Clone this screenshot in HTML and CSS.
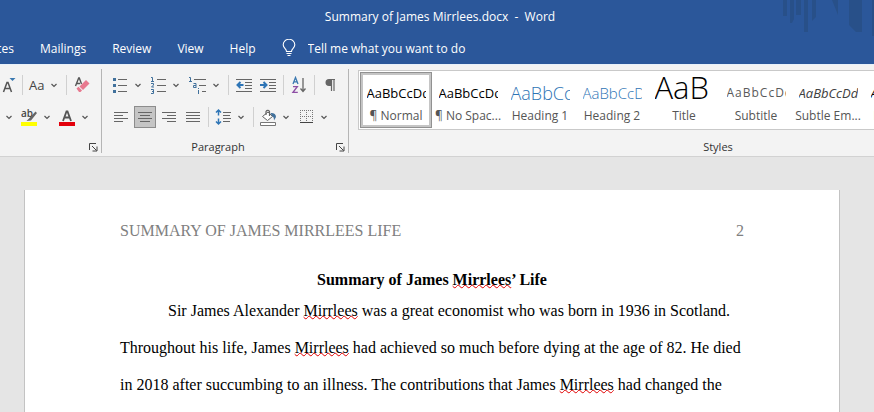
FILE: index.html
```html
<!DOCTYPE html>
<html lang="en">
<head>
    <meta charset="UTF-8">
    <meta name="viewport" content="width=device-width, initial-scale=1.0">
    <title>Summary of James Mirrlees.docx - Word</title>
    <link rel="stylesheet" href="styles.css">
</head>
<body>
    <svg class="symbols" aria-hidden="true">
        <symbol id="caret" viewBox="0 0 12 12"><path d="M3.5 5 L6 7.5 L8.5 5" fill="none" stroke="#555" stroke-width="1.2"/></symbol>
        <symbol id="launcher" viewBox="0 0 9 9"><path d="M0.5 7 V0.5 H7 M3 3 L7.5 7.5 M8 3.5 V8 H3.5" fill="none" stroke="#444"/></symbol>
    </svg>

    <header class="top">
        <div class="title-bar">
            <span class="doc-name">Summary of James Mirrlees.docx&nbsp; -&nbsp; Word</span>
            <svg class="art" width="94" height="36" viewBox="0 0 94 36" aria-hidden="true">
                <g fill="#285089">
                    <path d="M3 0h4v16h-4zM10 0h4v19l-2 4h-2zM16 0h5v15h-5zM24 0h4v32h-4zM32 0h4v17l-4 4z"/>
                    <path d="M52 0h6v15zM69 0h13v32h-6l-7-7zM92 0h2v36h-2z"/>
                </g>
            </svg>
        </div>
        <nav class="tabs">
            <a class="tab cut" href="#">References</a>
            <a class="tab" href="#">Mailings</a>
            <a class="tab" href="#">Review</a>
            <a class="tab" href="#">View</a>
            <a class="tab" href="#">Help</a>
            <label class="tell-me">
                <svg width="14" height="18" viewBox="0 0 14 18" fill="none" stroke="#fff" stroke-width="1.1"><path d="M4.5 12.5 C4.5 9.5 1.2 9 1.2 5.8 A5.5 5.2 0 0 1 12.8 5.8 C12.8 9 9.5 9.5 9.5 12.5 Z M4.5 14.5 H9.5 M5.5 16.5 H8.5"/></svg>
                <input type="text" placeholder="Tell me what you want to do" aria-label="Tell me what you want to do">
            </label>
        </nav>
    </header>

    <div class="ribbon">
        <section class="group font-group">
            <div class="row">
                <button class="tool shrink" aria-label="Shrink font">
                    <svg width="16" height="18" viewBox="0 0 16 18"><path d="M2.5 16 L6 6.5 H7 L10.5 16 M3.8 12.5 H9.2" fill="none" stroke="#555" stroke-width="1.5"/><path d="M8.5 2 H14.5 L11.5 5z" fill="#3a78b0"/></svg>
                </button>
                <span class="sep"></span>
                <button class="split change-case" aria-label="Change case">Aa<svg class="caret"><use href="#caret"/></svg></button>
                <span class="sep"></span>
                <button class="tool" aria-label="Clear formatting">
                    <svg width="16" height="18" viewBox="0 0 16 18"><path d="M1.5 10 L4.7 2 H5.3 L7.5 8 M2.5 7.5 H6" fill="none" stroke="#555" stroke-width="1.4"/><path d="M5.5 10.5 L12 4 L15.5 7.5 L9 14z" fill="#e8798f"/><path d="M2.5 12.5 L4.5 10.8 L8 14.5 L6.5 16 H5z" fill="#e8798f"/></svg>
                </button>
            </div>
            <div class="row">
                <button class="tool caret-only" aria-label="Text effects"><svg class="caret"><use href="#caret"/></svg></button>
                <button class="split" aria-label="Text highlight color">
                    <svg width="16" height="18" viewBox="0 0 16 18"><path d="M0 14h16v4H0z" fill="#ffff00"/><text x="0" y="9" class="glyph-ab">ab</text><path d="M14.5 3.5 L8 10.5 L5.5 13 L10 12.5 L16 5z" fill="#666"/></svg>
                    <svg class="caret"><use href="#caret"/></svg>
                </button>
                <button class="split" aria-label="Font color">
                    <svg width="16" height="18" viewBox="0 0 16 18"><path d="M0 14h16v4H0z" fill="#e3000b"/><path d="M4 13 L7.5 3.5 H8.5 L12 13 M5.5 9.5 H10.5" fill="none" stroke="#555" stroke-width="1.8"/></svg>
                    <svg class="caret"><use href="#caret"/></svg>
                </button>
            </div>
            <div class="group-foot">
                <span class="group-name"></span>
                <button class="launcher" aria-label="Font settings"><svg width="9" height="9"><use href="#launcher"/></svg></button>
            </div>
        </section>

        <section class="group paragraph-group">
            <div class="row">
                <button class="split" aria-label="Bullets">
                    <svg width="16" height="18" viewBox="0 0 16 18"><path d="M1 2h3v3H1zM1 8h3v3H1zM1 14h3v3H1z" fill="#41719c"/><path d="M6 3.5h9M6 9.5h9M6 15.5h9" stroke="#666"/></svg>
                    <svg class="caret"><use href="#caret"/></svg>
                </button>
                <button class="split" aria-label="Numbering">
                    <svg width="16" height="18" viewBox="0 0 16 18"><path d="M1 1.5H2.5V5M1 5.5H4M1 7.5H3.5V9L1.5 11H4M1 13.5H3.5V17.5H1M2 15.5H3.5" fill="none" stroke="#41719c"/><path d="M7 3.5h9M7 9.5h9M7 15.5h9" stroke="#666"/></svg>
                    <svg class="caret"><use href="#caret"/></svg>
                </button>
                <button class="split" aria-label="Multilevel list">
                    <svg width="18" height="18" viewBox="0 0 18 18"><path d="M1 1.5H2.5V5M1 5.5H4M5.5 7.5H8V11M8 9.5H5.5V11.5H8.5M10.5 12V13M10.5 14V18" fill="none" stroke="#41719c"/><path d="M6 3.5h12M11 9.5h7M14 15.5h4" stroke="#666"/></svg>
                    <svg class="caret"><use href="#caret"/></svg>
                </button>
                <span class="sep"></span>
                <button class="tool" aria-label="Decrease indent">
                    <svg width="16" height="14" viewBox="0 0 16 14"><path d="M0 1.5h16M9 4.5h7M9 7.5h7M9 10.5h7M0 13.5h16" stroke="#666"/><path d="M7.5 7 H2 M4.5 4 L1.5 7 L4.5 10" fill="none" stroke="#2e75b6" stroke-width="2"/></svg>
                </button>
                <button class="tool" aria-label="Increase indent">
                    <svg width="16" height="14" viewBox="0 0 16 14"><path d="M0 1.5h16M9 4.5h7M9 7.5h7M9 10.5h7M0 13.5h16" stroke="#666"/><path d="M0 7 H5.5 M3.5 4 L6.5 7 L3.5 10" fill="none" stroke="#2e75b6" stroke-width="2"/></svg>
                </button>
                <span class="sep"></span>
                <button class="tool" aria-label="Sort">
                    <svg width="16" height="18" viewBox="0 0 16 18" fill="none"><path d="M2 8 L4.5 1.5 L7 8 M3 5.8 H6" stroke="#3a78b0" stroke-width="1.3"/><path d="M2 10.6 H6.3 L2 16.4 H6.8" stroke="#8e4fa5" stroke-width="1.4"/><path d="M12 2 V15.5 M9.5 12.5 L12 15.5 L14.5 12.5" stroke="#666" stroke-width="1.3"/></svg>
                </button>
                <span class="sep"></span>
                <button class="tool" aria-label="Show formatting marks">
                    <svg width="12" height="14" viewBox="0 0 12 14"><path d="M11 1.5H5 M7.5 1.5V13 M10 1.5V13" fill="none" stroke="#666" stroke-width="1.2"/><path d="M7 1H5a3.4 3.4 0 0 0 0 7h2z" fill="#666"/></svg>
                </button>
            </div>
            <div class="row">
                <button class="tool" aria-label="Align left"><svg width="14" height="12" viewBox="0 0 14 12"><path d="M0 1.5h14M0 4.5h9M0 7.5h14M0 10.5h9" stroke="#666"/></svg></button>
                <button class="tool active" aria-label="Center"><svg width="14" height="12" viewBox="0 0 14 12"><path d="M0 1.5h14M2 4.5h10M0 7.5h14M2 10.5h10" stroke="#666"/></svg></button>
                <button class="tool" aria-label="Align right"><svg width="14" height="12" viewBox="0 0 14 12"><path d="M0 1.5h14M5 4.5h9M0 7.5h14M5 10.5h9" stroke="#666"/></svg></button>
                <button class="tool" aria-label="Justify"><svg width="14" height="12" viewBox="0 0 14 12"><path d="M0 1.5h14M0 4.5h14M0 7.5h14M0 10.5h14" stroke="#666"/></svg></button>
                <span class="sep"></span>
                <button class="split" aria-label="Line spacing">
                    <svg width="16" height="18" viewBox="0 0 16 18"><path d="M3.5 2V7.5M3.5 10.5V16M1 4.5L3.5 2L6 4.5M1 13.5L3.5 16L6 13.5" fill="none" stroke="#2e75b6" stroke-width="1.5"/><path d="M8 4.5h8M8 7.5h7M8 10.5h8M8 13.5h7" stroke="#666"/></svg>
                    <svg class="caret"><use href="#caret"/></svg>
                </button>
                <span class="sep"></span>
                <button class="split" aria-label="Shading">
                    <svg width="16" height="18" viewBox="0 0 16 18"><path d="M.5 14.5h15v3H.5z" fill="#fff" stroke="#777"/><path d="M2.5 8.5L8 4L12.5 8.5L7.5 12.5z" fill="#fff" stroke="#666"/><path d="M6 7V3.500a2 2 0 0 1 3.5 0V8" fill="none" stroke="#666" stroke-width="1.2"/><path d="M10.5 5C13.5 4.5 16 6 16 9L14 12.5C14 9.5 13 8.5 12 8z" fill="#41719c"/></svg>
                    <svg class="caret"><use href="#caret"/></svg>
                </button>
                <button class="split" aria-label="Borders">
                    <svg width="16" height="18" viewBox="0 0 16 18"><path d="M2 2.5h13M2 8.5h13M2.5 2v12M8.5 2v12M14.5 2v12" stroke="#777" stroke-dasharray="1 1"/><path d="M2 14.5h13" stroke="#444"/></svg>
                    <svg class="caret"><use href="#caret"/></svg>
                </button>
            </div>
            <div class="group-foot">
                <span class="group-name">Paragraph</span>
                <button class="launcher" aria-label="Paragraph settings"><svg width="9" height="9"><use href="#launcher"/></svg></button>
            </div>
        </section>

        <section class="group styles-group">
            <div class="gallery">
                <button class="style selected"><span class="preview">AaBbCcDd</span><span class="style-name">¶ Normal</span></button>
                <button class="style"><span class="preview">AaBbCcDd</span><span class="style-name">¶ No Spac...</span></button>
                <button class="style"><span class="preview heading1">AaBbCcDd</span><span class="style-name">Heading 1</span></button>
                <button class="style"><span class="preview heading2">AaBbCcDd</span><span class="style-name">Heading 2</span></button>
                <button class="style"><span class="preview title">AaB</span><span class="style-name">Title</span></button>
                <button class="style"><span class="preview subtitle">AaBbCcDd</span><span class="style-name">Subtitle</span></button>
                <button class="style"><span class="preview emphasis">AaBbCcDd</span><span class="style-name">Subtle Em...</span></button>
                <button class="style"><span class="preview emphasis strong">AaBbCcDd</span><span class="style-name">Emphasis</span></button>
            </div>
            <div class="group-foot">
                <span class="group-name">Styles</span>
            </div>
        </section>
    </div>

    <main class="workspace">
        <article class="page">
            <div class="page-header"><span>SUMMARY OF JAMES MIRRLEES LIFE</span><span>2</span></div>
            <h1>Summary of James <span class="typo">Mirrlees</span>’ Life</h1>
            <p>Sir James Alexander <span class="typo">Mirrlees</span> was a great economist who was born in 1936 in Scotland. Throughout his life, James <span class="typo">Mirrlees</span> had achieved so much before dying at the age of 82. He died in 2018 after succumbing to an illness. The contributions that James <span class="typo">Mirrlees</span> had changed the</p>
        </article>
    </main>
</body>
</html>
```
FILE: styles.css
```css
* {
    box-sizing: border-box;
}

body {
    margin: 0;
    height: 100vh;
    display: flex;
    flex-direction: column;
    overflow: hidden;
    font-family: "Open Sans", "Noto Sans", sans-serif;
    font-size: 12px;
    background-color: #e5e5e5;
}

button {
    border: 0;
    padding: 0;
    background: none;
    font: inherit;
    color: #444;
}

.symbols {
    display: none;
}

/* Title bar and tabs */
.top {
    background-color: #2b579a;
    color: #fff;
}

.title-bar {
    position: relative;
    height: 32px;
    display: flex;
    justify-content: center;
    align-items: center;
    padding-left: 6px;
}

.art {
    position: absolute;
    top: 0;
    right: 0;
}

.tabs {
    height: 32px;
    display: flex;
    align-items: center;
}

.tab {
    padding: 0 13px;
    color: #fff;
    text-decoration: none;
}

.tab.cut {
    width: 27px;
    display: flex;
    justify-content: flex-end;
    overflow: hidden;
}

.tell-me {
    flex: 1;
    display: flex;
    align-items: center;
    gap: 12px;
    padding-left: 13px;
}

.tell-me input {
    flex: 1;
    border: 0;
    padding: 0;
    background: none;
    font: inherit;
    color: #fff;
}

.tell-me input::placeholder {
    color: #fff;
    opacity: 1;
}

/* Ribbon */
.ribbon {
    display: flex;
    flex: none;
    height: 93px;
    padding: 4px 0 3px;
    overflow: hidden;
    background-color: #f3f3f3;
    border-top: 1px solid #e8f1fa;
    border-bottom: 1px solid #d2d2d2;
}

.group {
    flex: none;
    display: flex;
    flex-direction: column;
    border-right: 1px solid #b5b5b5;
}

.font-group {
    width: 102px;
}

.paragraph-group {
    width: 247px;
    padding-left: 8px;
}

.styles-group {
    width: 740px;
    padding-left: 9px;
}

.row {
    display: flex;
    align-items: center;
    gap: 2px;
    height: 32px;
}

.tool {
    flex: none;
    width: 22px;
    height: 22px;
    display: flex;
    justify-content: center;
    align-items: center;
}

.tool.active {
    background-color: #c5c5c5;
    border: 1px solid #8c8c8c;
}

.tool.shrink {
    width: 18px;
}

.tool.caret-only {
    width: 17px;
}

.split {
    flex: none;
    height: 22px;
    padding: 0 2px;
    display: flex;
    align-items: center;
    gap: 4px;
}

.change-case {
    font-size: 13px;
}

.caret {
    width: 12px;
    height: 12px;
}

.sep {
    width: 1px;
    height: 20px;
    margin: 0 2px;
    background-color: #d0d0d0;
}

.glyph-ab {
    font-size: 10px;
    font-weight: 600;
    fill: #444;
}

.group-foot {
    margin-top: auto;
    height: 12px;
    display: flex;
    align-items: center;
}

.group-name {
    flex: 1;
    padding-right: 10px;
    text-align: center;
    font-size: 11px;
    line-height: 12px;
    color: #333;
}

.launcher {
    display: flex;
    margin-right: 3px;
}

/* Style gallery */
.gallery {
    display: flex;
    height: 60px;
    margin-top: 1px;
    padding: 1px;
    background-color: #fff;
    border: 1px solid #c9c9c9;
}

.style {
    flex: none;
    width: 72px;
    height: 56px;
    border: 3px solid transparent;
    display: flex;
    flex-direction: column;
    align-items: center;
}

.style.selected {
    border-color: #c5c5c5;
    outline: 1px solid #919191;
    outline-offset: -1px;
}

.preview {
    width: 59px;
    height: 33px;
    line-height: 36px;
    overflow: hidden;
    text-align: left;
    white-space: nowrap;
    font-size: 13px;
    color: #000;
}

.style-name {
    line-height: 18px;
    white-space: nowrap;
    color: #555;
}

.heading1 {
    font-size: 18px;
    font-weight: 300;
    color: #2e74b5;
}

.heading2 {
    font-size: 15px;
    font-weight: 300;
    color: #2e74b5;
}

.title {
    font-size: 31px;
    font-weight: 300;
    line-height: 24px;
}

.subtitle {
    font-size: 12px;
    color: #5a5a5a;
    letter-spacing: 1px;
}

.emphasis {
    font-style: italic;
    color: #404040;
}

.strong {
    color: #000;
}

/* Document */
.workspace {
    flex: 1;
    display: flex;
    padding: 33px 34px 0 24px;
}

.page {
    flex: 1;
    padding: 31px 95px 0 95px;
    background-color: #fff;
    border: solid #c3c3c3;
    border-width: 0 1px;
    font-family: "Liberation Serif", "Times New Roman", serif;
    font-size: 16px;
    color: #000;
}

.page-header {
    display: flex;
    justify-content: space-between;
    line-height: 20px;
    color: #808080;
}

.page h1 {
    margin: 29px 0 0;
    font-size: 16px;
    line-height: 20px;
    text-align: center;
}

.page p {
    margin: 2px 0 0;
    line-height: 37px;
    text-indent: 48px;
}

.typo {
    text-decoration: underline wavy #e00000 1px;
    text-decoration-skip-ink: none;
    text-underline-offset: -1px;
}
```
